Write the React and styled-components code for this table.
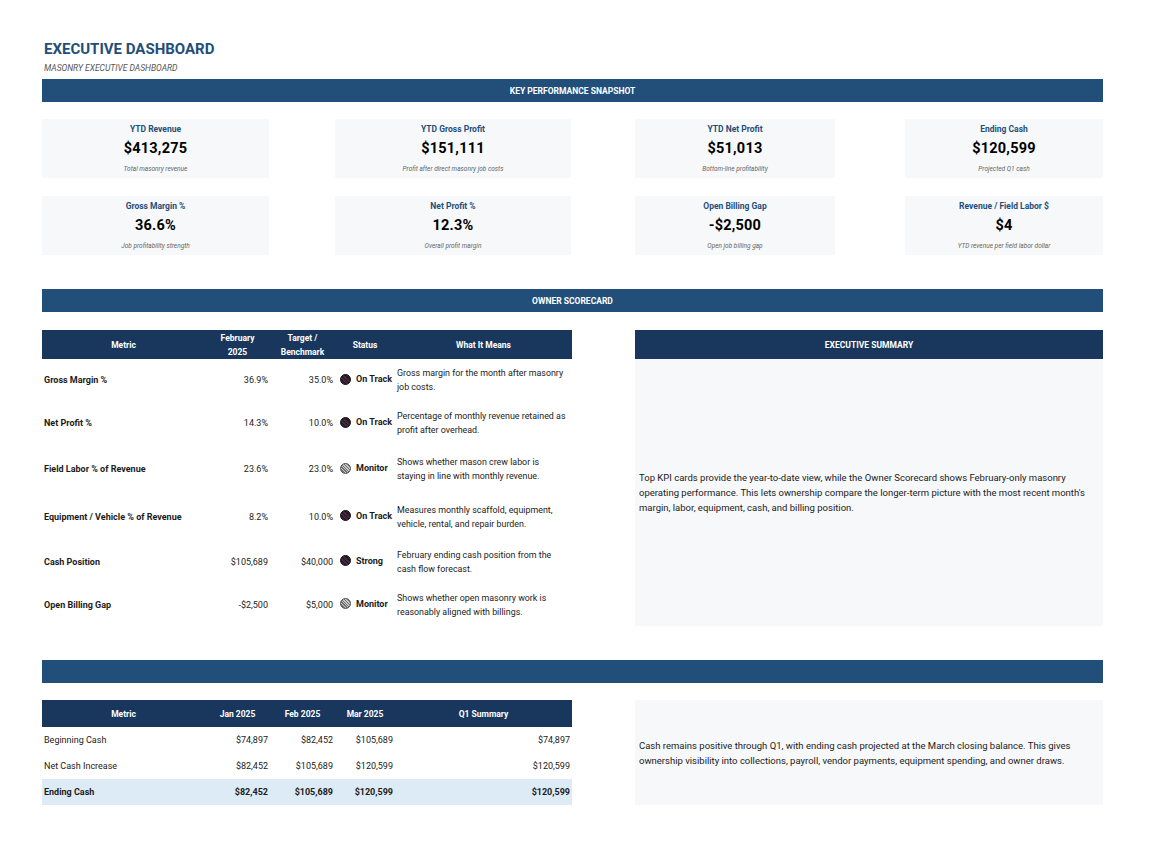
import React from "react";
import styled, { createGlobalStyle } from "styled-components";

const GlobalStyle = createGlobalStyle`
  body {
    margin: 0;
    background: #fff;
    font-family: Roboto, "Liberation Sans", sans-serif;
    color: #1b1b1b;
  }
`;

const Page = styled.div`
  width: 1061px;
  padding: 39px 0 40px 42px;
  display: flex;
  flex-direction: column;
`;

const Title = styled.h1`
  margin: 0 0 0 2px;
  font-size: 15px;
  font-weight: 700;
  color: #1f4e79;
  line-height: 20px;
`;

const Subtitle = styled.div`
  margin: 3px 0 0 2px;
  font-size: 8.5px;
  font-weight: 400;
  font-style: italic;
  color: #555;
  line-height: 12px;
`;

const Banner = styled.div`
  height: 23px;
  margin-top: ${(p) => p.$top}px;
  background: #224f7a;
  color: #fff;
  font-size: 8.5px;
  font-weight: 700;
  display: flex;
  align-items: center;
  justify-content: center;
`;

const KpiGrid = styled.div`
  margin-top: 17px;
  display: grid;
  grid-template-columns: 293px 300px 270px 198px;
  row-gap: 18px;
`;

const Card = styled.div`
  width: ${(p) => p.$w}px;
  height: 59px;
  background: #f6f8fa;
  display: flex;
  flex-direction: column;
  align-items: center;
  justify-content: center;
  gap: 4px;
`;

const CardLabel = styled.div`
  margin-top: 1px;
  font-size: 8.5px;
  font-weight: 700;
  color: #1f4e79;
  line-height: 12px;
`;

const CardValue = styled.div`
  font-size: 14.5px;
  font-weight: 700;
  letter-spacing: 0.2px;
  color: #000;
  line-height: 20px;
`;

const CardNote = styled.div`
  font-size: 6.5px;
  font-style: italic;
  color: #666;
  line-height: 12px;
`;

const Split = styled.div`
  margin-top: ${(p) => p.$top}px;
  display: flex;
  gap: 63px;
  align-items: stretch;
`;

const Table = styled.table`
  width: 530px;
  table-layout: fixed;
  border-collapse: collapse;
  border-spacing: 0;
  font-size: 9px;
`;

const Th = styled.th`
  background: #19375d;
  color: #fff;
  font-weight: 700;
  font-size: 8.5px;
  line-height: 14px;
  height: ${(p) => p.$h || 29}px;
  padding: 0 2px;
  text-align: center;
`;

const Row = styled.tr`
  height: ${(p) => p.$h}px;
  background: ${(p) => (p.$hl ? "#ddebf7" : "#fff")};
  font-weight: ${(p) => (p.$bold ? 700 : 400)};
`;

const Td = styled.td`
  padding: 0 2px;
  text-align: ${(p) => p.$align || "left"};
  font-weight: ${(p) => (p.$bold ? 700 : "inherit")};
  line-height: 14px;
  vertical-align: middle;
  color: #1b1b1b;
`;

const StatusCell = styled.td`
  padding: 0 0 0 5px;
  vertical-align: middle;
`;

const Status = styled.span`
  display: inline-flex;
  align-items: center;
  gap: 5px;
  font-weight: 700;
  font-size: 9px;
  color: #1b1b1b;
`;

const Dot = styled.span`
  width: 11px;
  height: 11px;
  border-radius: 50%;
  box-sizing: border-box;
  border: 1px solid ${(p) => (p.$kind === "monitor" ? "#555" : "#111")};
  background: ${(p) =>
    p.$kind === "monitor"
      ? "repeating-linear-gradient(45deg, #6f6f6f 0 1px, #c8c8c8 1px 2px)"
      : "repeating-linear-gradient(45deg, #1a1a1a 0 1px, #5b2330 1px 2px, #1c2a55 2px 3px)"};
`;

const Meaning = styled(Td)`
  font-size: 8.9px;
  padding-right: 4px;
`;

const SummaryBox = styled.div`
  width: 468px;
  display: flex;
  flex-direction: column;
`;

const SummaryHead = styled.div`
  height: 29px;
  background: #19375d;
  color: #fff;
  font-size: 8.5px;
  font-weight: 700;
  display: flex;
  align-items: center;
  justify-content: center;
`;

const SummaryBody = styled.div`
  flex: 1;
  background: #f6f8fa;
  display: flex;
  align-items: center;
  padding: 0 4px;
  font-size: 9.5px;
  line-height: 15px;
  color: #1b1b1b;
`;

const kpis = [
  { label: "YTD Revenue", value: "$413,275", note: "Total masonry revenue", w: 227 },
  { label: "YTD Gross Profit", value: "$151,111", note: "Profit after direct masonry job costs", w: 236 },
  { label: "YTD Net Profit", value: "$51,013", note: "Bottom-line profitability", w: 200 },
  { label: "Ending Cash", value: "$120,599", note: "Projected Q1 cash", w: 198 },
  { label: "Gross Margin %", value: "36.6%", note: "Job profitability strength", w: 227 },
  { label: "Net Profit %", value: "12.3%", note: "Overall profit margin", w: 236 },
  { label: "Open Billing Gap", value: "-$2,500", note: "Open job billing gap", w: 200 },
  { label: "Revenue / Field Labor $", value: "$4", note: "YTD revenue per field labor dollar", w: 198 },
];

const scorecard = [
  { m: "Gross Margin %", v: "36.9%", t: "35.0%", s: "On Track", k: "ok", d: "Gross margin for the month after masonry job costs.", h: 42 },
  { m: "Net Profit %", v: "14.3%", t: "10.0%", s: "On Track", k: "ok", d: "Percentage of monthly revenue retained as profit after overhead.", h: 44 },
  { m: "Field Labor % of Revenue", v: "23.6%", t: "23.0%", s: "Monitor", k: "monitor", d: "Shows whether mason crew labor is staying in line with monthly revenue.", h: 48 },
  { m: "Equipment / Vehicle % of Revenue", v: "8.2%", t: "10.0%", s: "On Track", k: "ok", d: "Measures monthly scaffold, equipment, vehicle, rental, and repair burden.", h: 47 },
  { m: "Cash Position", v: "$105,689", t: "$40,000", s: "Strong", k: "ok", d: "February ending cash position from the cash flow forecast.", h: 43 },
  { m: "Open Billing Gap", v: "-$2,500", t: "$5,000", s: "Monitor", k: "monitor", d: "Shows whether open masonry work is reasonably aligned with billings.", h: 43 },
];

const cash = [
  { m: "Beginning Cash", j: "$74,897", f: "$82,452", r: "$105,689", q: "$74,897" },
  { m: "Net Cash Increase", j: "$82,452", f: "$105,689", r: "$120,599", q: "$120,599" },
  { m: "Ending Cash", j: "$82,452", f: "$105,689", r: "$120,599", q: "$120,599", total: true },
];

const Cols = () => (
  <colgroup>
    <col style={{ width: "163px" }} />
    <col style={{ width: "65px" }} />
    <col style={{ width: "65px" }} />
    <col style={{ width: "60px" }} />
    <col style={{ width: "177px" }} />
  </colgroup>
);

export default function App() {
  return (
    <Page>
      <GlobalStyle />
      <Title>EXECUTIVE DASHBOARD</Title>
      <Subtitle>MASONRY EXECUTIVE DASHBOARD</Subtitle>
      <Banner $top={5}>KEY PERFORMANCE SNAPSHOT</Banner>

      <KpiGrid>
        {kpis.map((k) => (
          <Card key={k.label} $w={k.w}>
            <CardLabel>{k.label}</CardLabel>
            <CardValue>{k.value}</CardValue>
            <CardNote>{k.note}</CardNote>
          </Card>
        ))}
      </KpiGrid>

      <Banner $top={34}>OWNER SCORECARD</Banner>

      <Split $top={18}>
        <Table>
          <Cols />
          <thead>
            <tr>
              <Th>Metric</Th>
              <Th>February<br />2025</Th>
              <Th>Target /<br />Benchmark</Th>
              <Th>Status</Th>
              <Th>What It Means</Th>
            </tr>
          </thead>
          <tbody>
            {scorecard.map((r) => (
              <Row key={r.m} $h={r.h}>
                <Td $bold>{r.m}</Td>
                <Td $align="right">{r.v}</Td>
                <Td $align="right">{r.t}</Td>
                <StatusCell>
                  <Status>
                    <Dot $kind={r.k} />
                    {r.s}
                  </Status>
                </StatusCell>
                <Meaning>{r.d}</Meaning>
              </Row>
            ))}
          </tbody>
        </Table>

        <SummaryBox>
          <SummaryHead>EXECUTIVE SUMMARY</SummaryHead>
          <SummaryBody>
            Top KPI cards provide the year-to-date view, while the Owner Scorecard shows February-only masonry
            operating performance. This lets ownership compare the longer-term picture with the most recent
            month's margin, labor, equipment, cash, and billing position.
          </SummaryBody>
        </SummaryBox>
      </Split>

      <Banner $top={34} />

      <Split $top={17}>
        <Table>
          <Cols />
          <thead>
            <tr>
              <Th $h={27}>Metric</Th>
              <Th $h={27}>Jan 2025</Th>
              <Th $h={27}>Feb 2025</Th>
              <Th $h={27}>Mar 2025</Th>
              <Th $h={27}>Q1 Summary</Th>
            </tr>
          </thead>
          <tbody>
            {cash.map((r) => (
              <Row key={r.m} $h={26} $hl={r.total} $bold={r.total}>
                <Td>{r.m}</Td>
                <Td $align="right">{r.j}</Td>
                <Td $align="right">{r.f}</Td>
                <Td $align="right">{r.r}</Td>
                <Td $align="right">{r.q}</Td>
              </Row>
            ))}
          </tbody>
        </Table>

        <SummaryBox>
          <SummaryBody>
            Cash remains positive through Q1, with ending cash projected at the March closing balance. This gives
            ownership visibility into collections, payroll, vendor payments, equipment spending, and owner draws.
          </SummaryBody>
        </SummaryBox>
      </Split>
    </Page>
  );
}
